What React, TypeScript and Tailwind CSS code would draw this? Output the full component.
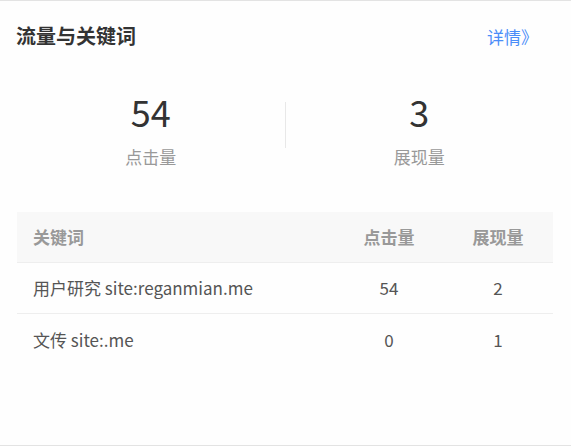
import React from "react";

const font = { fontFamily: '"Noto Sans CJK SC", "Noto Sans", sans-serif' };

export default function App() {
  const rows = [
    { k: "用户研究 site:reganmian.me", c: 54, s: 2 },
    { k: "文传 site:.me", c: 0, s: 1 },
  ];
  return (
    <div className="w-[571px] h-[446px] bg-[#fefefe] border-t border-b border-[#e3e3e3] flex flex-col" style={font}>
      <div className="h-[70px] flex items-center justify-between pl-[16px] pr-[33px]">
        <div className="text-[20px] font-bold text-[#333] leading-none">流量与关键词</div>
        <div className="text-[17px] text-[#4a8df8] leading-none">详情》</div>
      </div>
      <div className="mx-[17px] w-[536px] flex mt-[20px]">
        <div className="flex-1 flex flex-col items-center">
          <div className="text-[36px] leading-[40px] text-[#333]">54</div>
          <div className="text-[17px] leading-[24px] text-[#999] mt-[14px]">点击量</div>
        </div>
        <div className="w-px h-[46px] bg-[#e8e8e8] mt-[11px]" />
        <div className="flex-1 flex flex-col items-center">
          <div className="text-[36px] leading-[40px] text-[#333]">3</div>
          <div className="text-[17px] leading-[24px] text-[#999] mt-[14px]">展现量</div>
        </div>
      </div>
      <div className="mx-[17px] w-[536px] mt-[43px]">
        <div className="flex h-[51px] items-center bg-[#f8f8f8] border-b border-[#eeeeee] text-[17px] font-bold text-[#999]">
          <div className="flex-1 pl-[16px]">关键词</div>
          <div className="w-[108px] text-center">点击量</div>
          <div className="w-[110px] text-center">展现量</div>
        </div>
        {rows.map((r, i) => (
          <div
            key={i}
            className={"flex h-[51px] items-center text-[17px] text-[#555] " + (i === 0 ? "border-b border-[#eeeeee]" : "")}
          >
            <div className="flex-1 pl-[16px]">{r.k}</div>
            <div className="w-[108px] text-center">{r.c}</div>
            <div className="w-[110px] text-center">{r.s}</div>
          </div>
        ))}
      </div>
    </div>
  );
}
